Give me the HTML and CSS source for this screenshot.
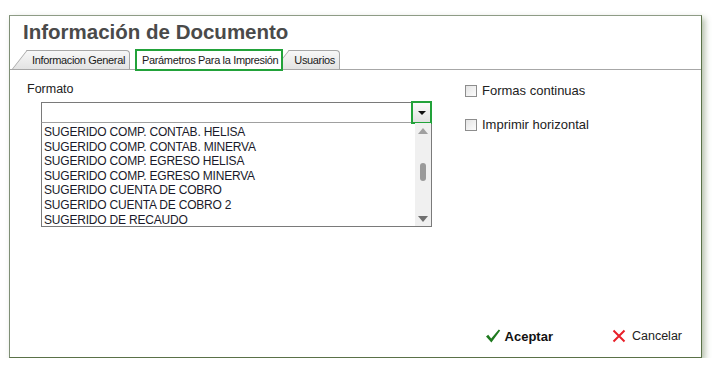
FILE: index.html
```html
<!DOCTYPE html>
<html lang="es">
<head>
    <meta charset="UTF-8">
    <title>Información de Documento</title>
    <link rel="stylesheet" href="styles.css">
</head>
<body>
    <div class="window">
        <h1>Información de Documento</h1>

        <div class="tabs">
            <div class="tab">Informacion General</div>
            <div class="tab active">Parámetros Para la Impresión</div>
            <div class="tab">Usuarios</div>
        </div>

        <div class="content">
            <div class="left">
                <label class="field-label">Formato</label>
                <div class="combo">
                    <div class="combo-input"></div>
                    <div class="combo-btn"><span class="arrow-down"></span></div>
                </div>
                <div class="listbox">
                    <ul>
                        <li>SUGERIDO COMP. CONTAB. HELISA</li>
                        <li>SUGERIDO COMP. CONTAB. MINERVA</li>
                        <li>SUGERIDO COMP. EGRESO HELISA</li>
                        <li>SUGERIDO COMP. EGRESO MINERVA</li>
                        <li>SUGERIDO CUENTA DE COBRO</li>
                        <li>SUGERIDO CUENTA DE COBRO 2</li>
                        <li>SUGERIDO DE RECAUDO</li>
                    </ul>
                    <div class="scrollbar">
                        <span class="sb-up"></span>
                        <span class="sb-thumb"></span>
                        <span class="sb-down"></span>
                    </div>
                </div>
            </div>
            <div class="right">
                <label class="check"><span class="box"></span>Formas continuas</label>
                <label class="check"><span class="box"></span>Imprimir horizontal</label>
            </div>
        </div>

        <div class="actions">
            <button class="btn btn-ok">
                <svg width="16" height="16" viewBox="0 0 16 16"><path d="M1 8.5 L3.2 6.8 L6.2 10.6 L13.8 1.5 L15.2 2.6 L6.4 14.5 Z" fill="#1f7a1f"/></svg>
                Aceptar
            </button>
            <button class="btn btn-cancel">
                <svg width="14" height="14" viewBox="0 0 14 14"><path d="M1.5 1.5 L12.5 12.5 M12.5 1.5 L1.5 12.5" stroke="#e8202a" stroke-width="2"/></svg>
                Cancelar
            </button>
        </div>
    </div>
</body>
</html>
```

FILE: styles.css
```css
body {
    margin: 0;
    background-color: #fff;
    font-family: "Liberation Sans", Arial, sans-serif;
    color: #222;
}
.window {
    margin: 15px 0 0 9px;
    width: 691px;
    height: 341px;
    border: 1px solid #5a7148;
    border-top-color: #8e9c86;
    border-left-color: #7f8f76;
    box-shadow: 3px 3px 6px rgba(90, 115, 70, 0.45);
    display: flex;
    flex-direction: column;
    background-color: #fff;
}
h1 {
    margin: 4px 0 0 13px;
    font-size: 20.5px;
    font-weight: bold;
    color: #4a4a4a;
    line-height: 24px;
}
.tabs {
    display: flex;
    align-items: flex-end;
    height: 21px;
    margin-top: 4px;
    padding-left: 21px;
    border-bottom: 1px solid #a7a7a7;
}
.tab {
    position: relative;
    z-index: 0;
    font-size: 11px;
    letter-spacing: -0.35px;
    height: 18px;
    line-height: 19px;
    padding: 0 4px 0 1px;
    color: #1a1a1a;
    background: linear-gradient(#f7f7f7, #e3e3e3);
    border: 1px solid #a7a7a7;
    border-left: none;
    border-bottom: none;
    border-top-right-radius: 4px;
}
.tab::before {
    content: "";
    position: absolute;
    left: -19px;
    top: -1px;
    bottom: 0;
    width: 22px;
    background: linear-gradient(#f7f7f7, #e3e3e3);
    border-left: 1px solid #a7a7a7;
    border-top: 1px solid #a7a7a7;
    transform: skewX(-38deg);
    transform-origin: bottom left;
    z-index: -1;
}
.tab.active {
    background: #fff;
    border: 2px solid #22a23a;
    border-radius: 0;
    height: 18px;
    padding: 0 3px 0 5px;
    margin: 0 10px 0 5px;
    top: 2px;
    line-height: 18px;
    z-index: 2;
}
.tab.active::before {
    display: none;
}
.content {
    display: flex;
    height: 235px;
}
.left {
    width: 440px;
    padding: 12px 0 0 17px;
    box-sizing: border-box;
}
.field-label {
    display: block;
    font-size: 12.5px;
    line-height: 14px;
    color: #222;
}
.combo {
    display: flex;
    margin: 6px 0 0 14px;
    width: 391px;
    height: 21px;
    border: 1px solid #7a7a7a;
    border-right: none;
    border-bottom-color: #a0a0a0;
    box-sizing: border-box;
}
.combo-input {
    flex: 1;
}
.combo-btn {
    width: 21px;
    height: 23px;
    margin-top: -2px;
    border: 2px solid #22a23a;
    box-sizing: border-box;
    background: linear-gradient(#fafafa, #e2e2e2);
    display: flex;
    align-items: center;
    justify-content: center;
}
.arrow-down {
    width: 0;
    height: 0;
    border-left: 4px solid transparent;
    border-right: 4px solid transparent;
    border-top: 4px solid #111;
}
.listbox {
    display: flex;
    margin-left: 14px;
    width: 391px;
    height: 104px;
    border: 1px solid #7a7a7a;
    border-top: none;
    box-sizing: border-box;
}
.listbox ul {
    flex: 1;
    list-style: none;
    margin: 0;
    padding: 2px 0 0 2px;
}
.listbox li {
    font-size: 12px;
    letter-spacing: -0.2px;
    line-height: 14.6px;
    color: #1a1a2a;
    white-space: nowrap;
}
.scrollbar {
    width: 16px;
    background-color: #f0f0f0;
    display: flex;
    flex-direction: column;
    align-items: center;
}
.sb-up {
    margin-top: 5px;
    border-left: 5px solid transparent;
    border-right: 5px solid transparent;
    border-bottom: 6px solid #a0a0a0;
}
.sb-thumb {
    margin-top: 29px;
    width: 6px;
    height: 18px;
    border-radius: 3px;
    background-color: #9a9a9a;
}
.sb-down {
    margin-top: auto;
    margin-bottom: 4px;
    border-left: 5px solid transparent;
    border-right: 5px solid transparent;
    border-top: 6px solid #707070;
}
.right {
    padding: 13px 0 0 15px;
    display: flex;
    flex-direction: column;
    gap: 19px;
}
.check {
    display: flex;
    align-items: center;
    font-size: 13px;
    color: #222;
}
.box {
    width: 10px;
    height: 10px;
    border: 1px solid #8d8d8d;
    background: linear-gradient(135deg, #e4e4e4, #fcfcfc);
    margin-right: 5px;
}
.actions {
    display: flex;
    justify-content: flex-end;
    align-items: center;
    gap: 59px;
    padding: 0 19px 0 0;
    margin-top: 23px;
}
.btn {
    display: flex;
    align-items: center;
    gap: 4px;
    background: none;
    border: none;
    padding: 0;
    font-family: "Liberation Sans", Arial, sans-serif;
    font-size: 12.5px;
    color: #222;
    cursor: pointer;
}
.btn-cancel {
    gap: 6px;
}
.btn-ok {
    font-weight: bold;
    font-size: 13px;
    color: #111;
}
```
